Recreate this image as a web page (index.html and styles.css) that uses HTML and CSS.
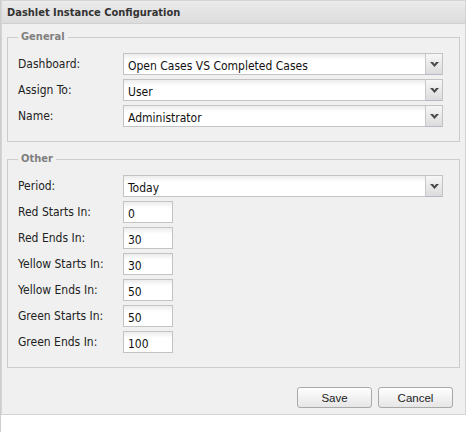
FILE: index.html
```html
<!DOCTYPE html>
<html>
<head>
<meta charset="utf-8">
<link rel="stylesheet" href="styles.css">
</head>
<body>
<div class="page">
  <div class="win">
    <div class="win-header"><span class="win-title">Dashlet Instance Configuration</span></div>
    <div class="win-body">
      <fieldset class="fs">
        <legend class="fs-legend">General</legend>
        <div class="row"><span class="lbl">Dashboard:</span><div class="combo"><span class="combo-text">Open Cases VS Completed Cases</span><span class="trigger"><svg width="9" height="6" viewBox="0 0 9 6"><polygon points="0,0 3,0 4.5,2 6,0 9,0 4.5,5" fill="#4a4a4a"/></svg></span></div></div>
        <div class="row"><span class="lbl">Assign To:</span><div class="combo"><span class="combo-text">User</span><span class="trigger"><svg width="9" height="6" viewBox="0 0 9 6"><polygon points="0,0 3,0 4.5,2 6,0 9,0 4.5,5" fill="#4a4a4a"/></svg></span></div></div>
        <div class="row"><span class="lbl">Name:</span><div class="combo"><span class="combo-text">Administrator</span><span class="trigger"><svg width="9" height="6" viewBox="0 0 9 6"><polygon points="0,0 3,0 4.5,2 6,0 9,0 4.5,5" fill="#4a4a4a"/></svg></span></div></div>
      </fieldset>
      <fieldset class="fs">
        <legend class="fs-legend">Other</legend>
        <div class="row"><span class="lbl">Period:</span><div class="combo"><span class="combo-text">Today</span><span class="trigger"><svg width="9" height="6" viewBox="0 0 9 6"><polygon points="0,0 3,0 4.5,2 6,0 9,0 4.5,5" fill="#4a4a4a"/></svg></span></div></div>
        <div class="row"><span class="lbl">Red Starts In:</span><div class="field">0</div></div>
        <div class="row"><span class="lbl">Red Ends In:</span><div class="field">30</div></div>
        <div class="row"><span class="lbl">Yellow Starts In:</span><div class="field">30</div></div>
        <div class="row"><span class="lbl">Yellow Ends In:</span><div class="field">50</div></div>
        <div class="row"><span class="lbl">Green Starts In:</span><div class="field">50</div></div>
        <div class="row"><span class="lbl">Green Ends In:</span><div class="field">100</div></div>
      </fieldset>
    </div>
    <div class="win-footer">
      <button class="btn">Save</button>
      <button class="btn">Cancel</button>
    </div>
  </div>
</div>
</body>
</html>
```
FILE: styles.css
```css
html, body {
  margin: 0;
  padding: 0;
  background: #ffffff;
}
body {
  font-family: "DejaVu Sans Condensed", "DejaVu Sans", sans-serif;
  font-size: 12px;
  color: #222;
}
.page {
  width: 467px;
  height: 432px;
  box-sizing: border-box;
  border-left: 1px solid #cdcdcd;
}
.win {
  width: 465px;
  box-sizing: border-box;
  border: 1px solid #d4d4d4;
  background: #f0f0f0;
}
.win-header {
  height: 22px;
  border-bottom: 1px solid #d0d0d0;
  background: linear-gradient(#ebebeb, #dcdcdc);
  padding-left: 5px;
  display: flex;
  align-items: center;
}
.win-title {
  font-weight: bold;
  font-size: 11px;
  color: #333;
  line-height: 14px;
  padding-top: 2px;
}
.win-body {
  padding: 6px 5px 0 5px;
}
.fs {
  margin: 0 0 10px 0;
  border: 1px solid #cccccc;
  padding: 9px 16px 10px 10px;
  min-width: 0;
}
.fs + .fs {
  margin-bottom: 0;
}
.fs-legend {
  font-weight: bold;
  font-size: 11px;
  line-height: 14px;
  color: #7f7f7f;
  padding: 0 3px;
}
.row {
  display: flex;
  height: 22px;
  margin-bottom: 4px;
}
.lbl {
  width: 105px;
  flex: none;
  line-height: 15px;
  padding-top: 4px;
  color: #222;
}
.combo {
  width: 320px;
  height: 22px;
  box-sizing: border-box;
  border: 1px solid #c3c3c3;
  background: linear-gradient(#ececec, #ffffff 6px);
  display: flex;
}
.combo-text {
  flex: 1;
  line-height: 15px;
  padding: 5px 0 0 4px;
  color: #111;
}
.trigger {
  width: 16px;
  flex: none;
  border-left: 1px solid #c8c8c8;
  background: linear-gradient(#f6f6f6, #dcdcdc);
  display: flex;
  align-items: center;
  justify-content: center;
  margin: -1px -1px -1px 0;
  border-top: 1px solid #c3c3c3;
  border-right: 1px solid #c3c3c3;
  border-bottom: 1px solid #b4b8c8;
}
.trigger svg {
  margin-top: 1px;
}
.field {
  width: 50px;
  height: 22px;
  box-sizing: border-box;
  border: 1px solid #c3c3c3;
  background: linear-gradient(#ececec, #ffffff 6px);
  line-height: 15px;
  padding: 5px 0 0 4px;
  color: #111;
}
.win-footer {
  display: flex;
  justify-content: flex-end;
  gap: 6px;
  padding: 19px 12px 6px 0;
}
.btn {
  width: 75px;
  height: 21px;
  border: 1px solid #a9a9a9;
  border-radius: 3px;
  background: linear-gradient(#ffffff, #f2f2f2 50%, #e6e6e6);
  font-family: "Liberation Sans", Arial, sans-serif;
  font-size: 11.5px;
  color: #222;
  padding: 0;
  margin: 0;
}
```
